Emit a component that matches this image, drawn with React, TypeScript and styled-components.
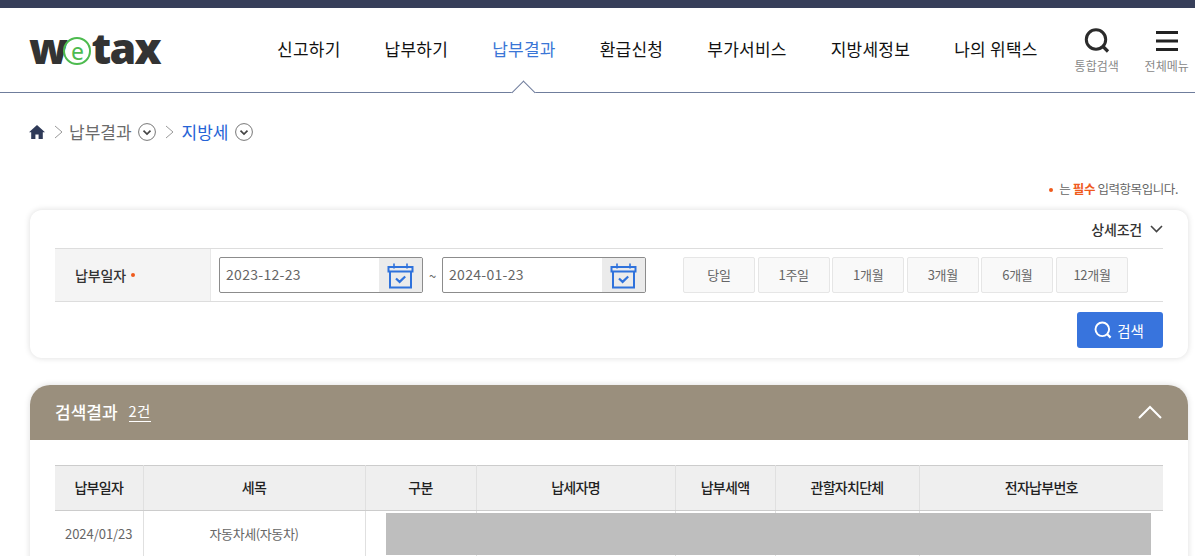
import React from "react";
import styled, { createGlobalStyle } from "styled-components";

const GlobalStyle = createGlobalStyle`
  html, body {
    margin: 0;
    padding: 0;
    height: 556px;
    overflow: hidden;
    background: #fff;
    font-family: "Noto Sans CJK KR", "Noto Sans", sans-serif;
    color: #333;
  }
`;

const Page = styled.div`
  width: 1195px;
`;

const TopBar = styled.div`
  height: 8px;
  background: #373f5a;
`;

const Header = styled.header`
  position: relative;
  height: 85px;
  box-sizing: border-box;
  border-bottom: 1px solid #6f7d9c;
  display: flex;
  align-items: center;
  padding-left: 29px;
`;

const Logo = styled.div`
  width: 132px;
  display: flex;
  align-items: center;
  height: 36px;
  margin-top: -4px;
  font-family: "Open Sans", sans-serif;
  font-weight: 800;
  font-size: 43px;
  line-height: 36px;
  letter-spacing: -1.7px;
  color: #333;
`;

const LogoE = styled.span`
  width: 28px;
  height: 28px;
  margin: 6px 0 0 -3px;
  flex: none;
  box-sizing: border-box;
  border: 2px solid #4dbb4f;
  border-radius: 50%;
  display: flex;
  align-items: center;
  justify-content: center;
  font-family: "Noto Sans", sans-serif;
  font-weight: 400;
  font-size: 23px;
  line-height: 20px;
  letter-spacing: 0;
  color: #4dbb4f;
`;

const Nav = styled.nav`
  display: flex;
  gap: 44px;
  margin-left: 116px;
  margin-top: -3px;
`;

const NavItem = styled.a<{ $active?: boolean }>`
  font-size: 17px;
  line-height: 26px;
  letter-spacing: 0.25px;
  white-space: nowrap;
  color: ${(p) => (p.$active ? "#3a76d6" : "#111")};
`;

const NavCaret = styled.span`
  position: absolute;
  left: 515px;
  bottom: -9px;
  width: 17px;
  height: 17px;
  background: #fff;
  border-left: 1px solid #6f7d9c;
  border-top: 1px solid #6f7d9c;
  box-sizing: border-box;
  transform: rotate(45deg);
`;

const Utils = styled.div`
  display: flex;
  gap: 26px;
  margin-left: 37px;
`;

const UtilButton = styled.div`
  width: 44px;
  display: flex;
  flex-direction: column;
  align-items: center;
  font-size: 12px;
  line-height: 15px;
  white-space: nowrap;
  color: #888;
  svg {
    display: block;
    margin-bottom: 4px;
  }
`;

const Crumbs = styled.div`
  display: flex;
  align-items: center;
  height: 26px;
  margin: 26px 0 0 29px;
`;

const CrumbText = styled.span<{ $current?: boolean }>`
  font-size: 17px;
  line-height: 26px;
  color: ${(p) => (p.$current ? "#2563d6" : "#6b6b6b")};
  margin: ${(p) => (p.$current ? "0 7px 0 8px" : "0 6px")};
`;

const Notice = styled.p`
  margin: 34px 17px 0 0;
  height: 19px;
  font-size: 12.5px;
  line-height: 19px;
  letter-spacing: -0.42px;
  text-align: right;
  color: #666;
  b {
    color: #ef5a1c;
    font-weight: 700;
  }
`;

const Dot = styled.i`
  display: inline-block;
  width: 4px;
  height: 4px;
  margin: 0 6px 2px 0;
  border-radius: 50%;
  vertical-align: middle;
  background: #ef5a1c;
`;

const SearchCard = styled.section`
  width: 1158px;
  height: 148px;
  box-sizing: border-box;
  margin: 12px 0 0 30px;
  padding: 0 25px;
  background: #fff;
  border-radius: 12px;
  box-shadow: 0 0 6px rgba(0, 0, 0, 0.14);
`;

const DetailRow = styled.div`
  height: 38px;
  display: flex;
  align-items: center;
  justify-content: flex-end;
  gap: 8px;
  font-size: 14px;
  font-weight: 500;
  letter-spacing: -0.2px;
  color: #333;
`;

const FieldRow = styled.div`
  display: flex;
  height: 54px;
  box-sizing: border-box;
  border-top: 1px solid #ddd;
  border-bottom: 1px solid #ddd;
`;

const FieldLabel = styled.div`
  width: 156px;
  box-sizing: border-box;
  padding-left: 20px;
  display: flex;
  align-items: center;
  background: #f4f4f4;
  border-right: 1px solid #e8e8e8;
  font-size: 14px;
  font-weight: 500;
  letter-spacing: -0.1px;
  color: #333;
  ${Dot} {
    margin: 0 0 0 5px;
  }
`;

const FieldBody = styled.div`
  flex: 1;
  display: flex;
  align-items: center;
  padding-left: 8px;
`;

const DateBox = styled.div`
  width: 204px;
  height: 36px;
  box-sizing: border-box;
  display: flex;
  border: 1px solid #8c8c8c;
  border-radius: 2px;
  overflow: hidden;
`;

const DateValue = styled.div`
  flex: 1;
  padding-left: 6px;
  font-size: 14px;
  line-height: 32px;
  letter-spacing: 0.3px;
  color: #666;
`;

const CalendarCell = styled.div`
  width: 43px;
  display: flex;
  align-items: center;
  justify-content: center;
  background: #ebebeb;
`;

const Tilde = styled.span`
  width: 19px;
  text-align: center;
  font-size: 13px;
  color: #666;
`;

const Periods = styled.div`
  display: flex;
  gap: 2.6px;
  margin-left: 37px;
`;

const PeriodButton = styled.button`
  width: 72px;
  height: 36px;
  padding: 0 0 2px;
  box-sizing: border-box;
  background: #f9f9f9;
  border: 1px solid #e6e6e6;
  border-radius: 2px;
  font-family: inherit;
  font-size: 13px;
  letter-spacing: -0.3px;
  color: #666;
`;

const Actions = styled.div`
  display: flex;
  justify-content: flex-end;
  padding-top: 10px;
`;

const SearchButton = styled.button`
  width: 86px;
  height: 36px;
  padding: 0 2px 0 0;
  display: flex;
  align-items: center;
  justify-content: center;
  gap: 5px;
  background: #3874dd;
  border: 0;
  border-radius: 3px;
  font-family: inherit;
  font-size: 14.5px;
  color: #fff;
`;

const ResultCard = styled.section`
  width: 1158px;
  height: 300px;
  margin: 27px 0 0 30px;
  background: #fff;
  border-radius: 20px 20px 0 0;
  box-shadow: 0 0 6px rgba(0, 0, 0, 0.14);
`;

const ResultHead = styled.div`
  height: 55px;
  box-sizing: border-box;
  padding: 0 26px 2px 25px;
  display: flex;
  align-items: center;
  background: #9a8f7d;
  border-radius: 20px 20px 0 0;
  color: #fff;
`;

const ResultTitle = styled.h2`
  margin: 0;
  font-size: 17px;
  font-weight: 500;
  line-height: 26px;
`;

const ResultCount = styled.span`
  margin-left: 11px;
  font-size: 14.5px;
  line-height: 20px;
  letter-spacing: 0.4px;
  border-bottom: 1px solid #fff;
  white-space: nowrap;
`;

const CollapseIcon = styled.svg`
  margin-left: auto;
`;

const TableWrap = styled.div`
  position: relative;
  margin: 25px 25px 0;
`;

const Table = styled.table`
  width: 1108px;
  table-layout: fixed;
  border-collapse: collapse;
  border-top: 1px solid #ccc;
`;

const Th = styled.th<{ $w?: number }>`
  box-sizing: border-box;
  width: ${(p) => (p.$w ? `${p.$w}px` : "auto")};
  height: 45px;
  padding: 0 0 2px;
  background: #efefef;
  border-bottom: 1px solid #ccc;
  border-left: 1px solid #e0e0e0;
  font-size: 14px;
  font-weight: 500;
  letter-spacing: -0.7px;
  color: #222;
  &:first-child {
    border-left: 0;
  }
`;

const Td = styled.td<{ $num?: boolean }>`
  height: 45px;
  padding: 0 0 3px;
  text-align: center;
  border-left: 1px solid #e0e0e0;
  font-size: 13px;
  letter-spacing: ${(p) => (p.$num ? "-0.05px" : "-0.4px")};
  color: #666;
  &:first-child {
    border-left: 0;
  }
`;

const Redaction = styled.div`
  position: absolute;
  left: 331px;
  top: 48px;
  width: 765px;
  height: 42px;
  background: #bebebe;
`;

const HomeIcon = () => (
  <svg width="16" height="14" viewBox="0 0 16 14" fill="#2f3a58">
    <path d="M8 0 16 7.2h-2.2V14H9.6V9.4H6.4V14H2.2V7.2H0z" />
  </svg>
);

const CrumbArrow = () => (
  <svg width="9" height="14" viewBox="0 0 9 14" fill="none" stroke="#999" style={{ marginLeft: 9 }}>
    <path d="M1 1l7 6-7 6" />
  </svg>
);

const CircleChevron = () => (
  <svg width="18" height="18" viewBox="0 0 18 18" fill="none">
    <circle cx="9" cy="9" r="8.4" stroke="#777" />
    <path d="M5.5 7.6 9 11l3.5-3.4" stroke="#444" strokeWidth="1.7" />
  </svg>
);

const CalendarIcon = () => (
  <svg width="27" height="27" viewBox="0 0 27 27" fill="none" stroke="#2f72dc">
    <path d="M1.5 5h24v4.5h-24z" strokeWidth="2" />
    <path d="M3 9.5V25.5H24V9.5" strokeWidth="2" />
    <path d="M7 1.5v5M20 1.5v5" strokeWidth="1.6" />
    <path d="M9 16.5l3.6 3.4 5.6-5.4" strokeWidth="2.2" />
  </svg>
);

const periods = ["당일", "1주일", "1개월", "3개월", "6개월", "12개월"];

const columns: { label: string; w: number }[] = [
  { label: "납부일자", w: 88 },
  { label: "세목", w: 222 },
  { label: "구분", w: 111 },
  { label: "납세자명", w: 199 },
  { label: "납부세액", w: 100 },
  { label: "관할자치단체", w: 144 },
  { label: "전자납부번호", w: 244 },
];

const App = () => {
  return (
    <Page>
      <GlobalStyle />
      <TopBar />
      <Header>
        <Logo>
          w<LogoE>e</LogoE>tax
        </Logo>
        <Nav>
          <NavItem>신고하기</NavItem>
          <NavItem>납부하기</NavItem>
          <NavItem $active>납부결과</NavItem>
          <NavItem>환급신청</NavItem>
          <NavItem>부가서비스</NavItem>
          <NavItem>지방세정보</NavItem>
          <NavItem>나의 위택스</NavItem>
        </Nav>
        <NavCaret />
        <Utils>
          <UtilButton>
            <svg width="26" height="26" viewBox="0 0 26 26" fill="none" stroke="#2b2b2b">
              <circle cx="12" cy="11.5" r="9.7" strokeWidth="3" />
              <path d="M19 18.5l5 5" strokeWidth="3.2" />
            </svg>
            통합검색
          </UtilButton>
          <UtilButton>
            <svg width="26" height="26" viewBox="0 0 26 26" fill="#222">
              <path d="M2 3h22v3H2zM2 11.5h22v3H2zM2 20h22v3H2z" />
            </svg>
            전체메뉴
          </UtilButton>
        </Utils>
      </Header>
      <Crumbs>
        <HomeIcon />
        <CrumbArrow />
        <CrumbText>납부결과</CrumbText>
        <CircleChevron />
        <CrumbArrow />
        <CrumbText $current>지방세</CrumbText>
        <CircleChevron />
      </Crumbs>
      <Notice>
        <Dot />는 <b>필수</b> 입력항목입니다.
      </Notice>
      <SearchCard>
        <DetailRow>
          상세조건
          <svg width="13" height="8" viewBox="0 0 13 8" fill="none" stroke="#444" strokeWidth="1.6">
            <path d="M1 1l5.5 5.5L12 1" />
          </svg>
        </DetailRow>
        <FieldRow>
          <FieldLabel>
            납부일자
            <Dot />
          </FieldLabel>
          <FieldBody>
            <DateBox>
              <DateValue>2023-12-23</DateValue>
              <CalendarCell>
                <CalendarIcon />
              </CalendarCell>
            </DateBox>
            <Tilde>~</Tilde>
            <DateBox>
              <DateValue>2024-01-23</DateValue>
              <CalendarCell>
                <CalendarIcon />
              </CalendarCell>
            </DateBox>
            <Periods>
              {periods.map((p) => (
                <PeriodButton key={p}>{p}</PeriodButton>
              ))}
            </Periods>
          </FieldBody>
        </FieldRow>
        <Actions>
          <SearchButton>
            <svg width="18" height="18" viewBox="0 0 18 18" fill="none" stroke="#fff">
              <circle cx="8.3" cy="8.3" r="6.8" strokeWidth="1.9" />
              <path d="M13 13l3.6 3.6" strokeWidth="2.2" />
            </svg>
            검색
          </SearchButton>
        </Actions>
      </SearchCard>
      <ResultCard>
        <ResultHead>
          <ResultTitle>검색결과</ResultTitle>
          <ResultCount>2건</ResultCount>
          <CollapseIcon width="24" height="14" viewBox="0 0 24 14" fill="none" stroke="#fff" strokeWidth="2">
            <path d="M1 13 12 2l11 11" />
          </CollapseIcon>
        </ResultHead>
        <TableWrap>
          <Table>
            <thead>
              <tr>
                {columns.map((c) => (
                  <Th key={c.label} $w={c.w}>
                    {c.label}
                  </Th>
                ))}
              </tr>
            </thead>
            <tbody>
              <tr>
                <Td $num>2024/01/23</Td>
                <Td>자동차세(자동차)</Td>
                <Td />
                <Td />
                <Td />
                <Td />
                <Td />
              </tr>
            </tbody>
          </Table>
          <Redaction />
        </TableWrap>
      </ResultCard>
    </Page>
  );
};

export default App;
